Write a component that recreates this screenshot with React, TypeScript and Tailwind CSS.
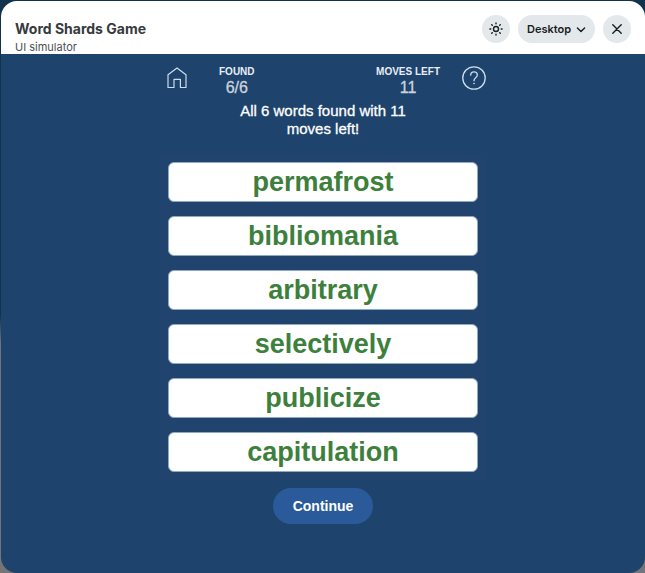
import React, { useState } from 'react';

interface StatProps {
  label: string;
  value: string | number;
}

const WORDS = ['permafrost', 'bibliomania', 'arbitrary', 'selectively', 'publicize', 'capitulation'];

const SunIcon = () => (
  <svg viewBox="0 0 16 16" className="w-4 h-4" fill="none" stroke="currentColor" strokeWidth="1.4" strokeLinecap="round" aria-hidden="true">
    <circle cx="8" cy="8" r="2.5" />
    <path d="M8 1.9v.9M8 13.2v.9M1.9 8h.9M13.2 8h.9M3.7 3.7l.6.6M11.7 11.7l.6.6M3.7 12.3l.6-.6M11.7 4.3l.6-.6" />
  </svg>
);

const HomeIcon = () => (
  <svg viewBox="0 0 20 22" className="w-5 h-[22px]" fill="none" stroke="currentColor" strokeWidth="1.2" strokeLinejoin="round" aria-hidden="true">
    <path d="M1 8.7 10 2l9 6.7v12.8h-5.6v-8.2H7v8.2H1z" />
  </svg>
);

const HelpIcon = () => (
  <svg viewBox="0 0 24 24" className="w-6 h-6" fill="none" stroke="currentColor" strokeWidth="1.3" strokeLinecap="round" aria-hidden="true">
    <circle cx="12" cy="12" r="11.2" />
    <path d="M8.7 9.2c0-2 1.4-3.3 3.3-3.3s3.3 1.3 3.3 3.1c0 1.5-.8 2.1-1.8 2.9-1 .8-1.5 1.4-1.5 2.9" />
    <circle cx="12" cy="17.6" r=".5" fill="currentColor" strokeWidth=".6" />
  </svg>
);

const Stat: React.FC<StatProps> = ({ label, value }) => (
  <div className="flex flex-col items-center gap-[2px]">
    <span className="text-[10px] leading-3 font-bold text-[#e8eef6]">{label}</span>
    <span className="text-base leading-4 text-[#ccd3de] [-webkit-text-stroke:0.3px]">{value}</span>
  </div>
);

const App: React.FC = () => {
  const [device, setDevice] = useState('Desktop');

  return (
    <div className="min-h-screen flex flex-col bg-linear-to-b from-[#12334c] from-55% to-[#757575] to-60% pt-px pl-px">
      <div className="flex-1 flex flex-col rounded-2xl overflow-hidden bg-[#1e436c]">
        {/* Header */}
        <header className="flex items-start justify-between h-[53px] bg-white px-[14px] font-['Inter',sans-serif]">
          <div className="pt-[18px]">
            <h1 className="text-sm leading-5 font-bold text-[#363a3e]">Word Shards Game</h1>
            <p className="text-[11px] leading-4 text-[#4b4f53]">UI simulator</p>
          </div>
          <div className="flex items-center gap-2 pt-[14px] text-[#1a1e22]">
            <button aria-label="Toggle theme" className="w-7 h-7 rounded-full bg-[#e3e8eb] flex items-center justify-center">
              <SunIcon />
            </button>
            <div className="relative">
              <select
                aria-label="Device"
                value={device}
                onChange={(e) => setDevice(e.target.value)}
                className="appearance-none w-[77px] h-7 pl-[9px] rounded-full bg-[#e3e8eb] text-[11px] font-semibold"
              >
                <option>Desktop</option>
                <option>Mobile</option>
              </select>
              <svg viewBox="0 0 10 6" className="absolute right-[9px] top-3 w-[10px] h-[6px] pointer-events-none" fill="none" stroke="currentColor" strokeWidth="1.4" strokeLinecap="round" strokeLinejoin="round" aria-hidden="true">
                <path d="M1.4 1 5 4.6 8.6 1" />
              </svg>
            </div>
            <button aria-label="Close" className="w-7 h-7 rounded-full bg-[#e3e8eb] flex items-center justify-center">
              <svg viewBox="0 0 10 10" className="w-[10px] h-[10px]" fill="none" stroke="currentColor" strokeWidth="1.4" strokeLinecap="round" aria-hidden="true">
                <path d="M.8.8l8.4 8.4M9.2.8.8 9.2" />
              </svg>
            </button>
          </div>
        </header>

        {/* Game */}
        <main className="w-full max-w-[326px] mx-auto flex flex-col items-center pt-3 font-['Liberation_Sans',Arial,sans-serif]">
          <div className="w-full flex items-start justify-between pl-[7px]">
            <button aria-label="Home" className="w-5 text-[#cfdcec]">
              <HomeIcon />
            </button>
            <div className="flex-1 flex justify-between pl-8 pr-[22px]">
              <Stat label="FOUND" value="6/6" />
              <Stat label="MOVES LEFT" value={11} />
            </div>
            <button aria-label="Help" className="w-6 text-[#cfdcec]">
              <HelpIcon />
            </button>
          </div>

          <p className="w-[200px] mt-[6px] text-center text-[15px] leading-[18px] text-white [-webkit-text-stroke:0.3px]">
            All 6 words found with 11 moves left!
          </p>

          <ul className="w-full mt-4 p-2 flex flex-col gap-[14px] bg-[#20446d]">
            {WORDS.map((word) => (
              <li
                key={word}
                className="h-10 rounded-md border border-[#8fa8c4] bg-white flex items-center justify-center text-[27px] leading-8 font-bold text-[#3d803c]"
              >
                {word}
              </li>
            ))}
          </ul>

          <button className="mt-2 mb-4 h-9 px-5 rounded-full bg-[#2a5a99] text-sm font-bold text-white">
            Continue
          </button>
        </main>
      </div>
    </div>
  );
};

export default App;
